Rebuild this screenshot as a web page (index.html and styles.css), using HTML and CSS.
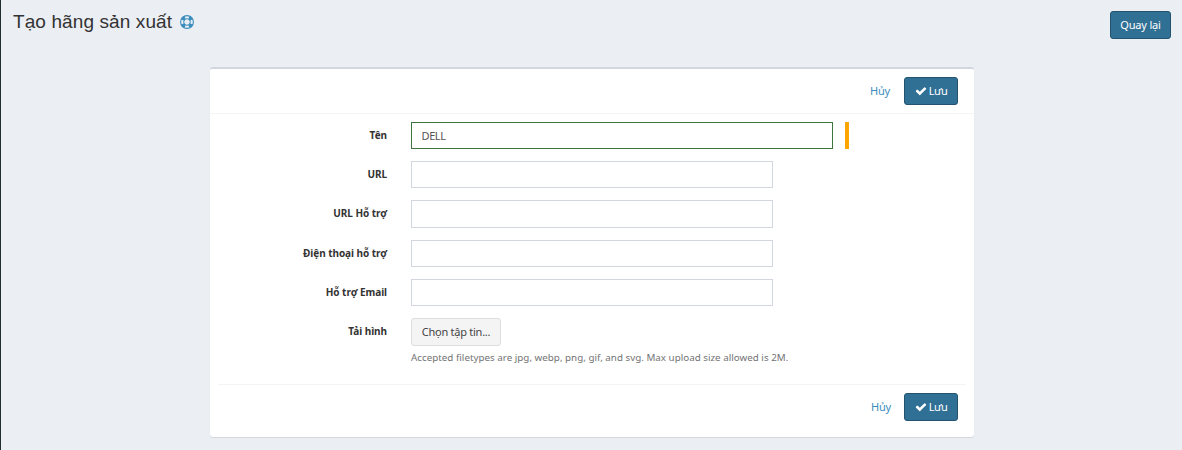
FILE: index.html
```html
<!DOCTYPE html>
<html lang="vi">
<head>
<meta charset="utf-8">
<title>Tạo hãng sản xuất</title>
<link rel="stylesheet" href="styles.css">
</head>
<body>
<header class="page-head">
  <h1 class="title"><span class="title-text">Tạo hãng sản xuất</span>
    <svg class="ring" viewBox="0 0 14 14"><circle cx="7" cy="7" r="6.4" fill="none" stroke="currentColor" stroke-width="1.1"/><circle cx="7" cy="7" r="3.3" fill="none" stroke="currentColor" stroke-width="1"/><circle cx="7" cy="7" r="4.9" fill="none" stroke="currentColor" stroke-width="3.8" pathLength="80" stroke-dasharray="9 11" stroke-dashoffset="-5.5"/></svg>
  </h1>
  <a class="btn back"><span>Quay lại</span></a>
</header>
<main class="box">
  <div class="actions top">
    <a class="cancel">Hủy</a>
    <button class="btn save"><svg class="check" viewBox="0 0 1792 1792"><path fill="currentColor" d="M1671 566q0 40-28 68l-724 724-136 136q-28 28-68 28t-68-28l-136-136-362-362q-28-28-28-68t28-68l136-136q28-28 68-28t68 28l294 295 656-657q28-28 68-28t68 28l136 136q28 28 28 68z"/></svg><span class="save-text">Lưu</span></button>
  </div>
  <form class="form">
    <div class="row"><label>Tên</label><input class="field name" value="DELL"><i class="required"></i></div>
    <div class="row"><label>URL</label><input class="field"></div>
    <div class="row"><label>URL Hỗ trợ</label><input class="field tall"></div>
    <div class="row"><label>Điện thoại hỗ trợ</label><input class="field"></div>
    <div class="row"><label>Hỗ trợ Email</label><input class="field"></div>
    <div class="row"><label>Tải hình</label><span class="file"><span>Chọn tập tin...</span></span></div>
    <p class="help">Accepted filetypes are jpg, webp, png, gif, and svg. Max upload size allowed is 2M.</p>
  </form>
  <div class="actions bottom">
    <a class="cancel">Hủy</a>
    <button class="btn save"><svg class="check" viewBox="0 0 1792 1792"><path fill="currentColor" d="M1671 566q0 40-28 68l-724 724-136 136q-28 28-68 28t-68-28l-136-136-362-362q-28-28-28-68t28-68l136-136q28-28 68-28t68 28l294 295 656-657q28-28 68-28t68 28l136 136q28 28 28 68z"/></svg><span class="save-text">Lưu</span></button>
  </div>
</main>
</body>
</html>
```
FILE: styles.css
```css
* { box-sizing: border-box; }
body {
  margin: 0;
  height: 450px;
  overflow: hidden;
  background: #ebeef3;
  border-left: 1px solid #222d32;
  font-family: "Noto Sans", "Open Sans", sans-serif;
  font-size: 11px;
  color: #333;
}
.page-head {
  display: flex;
  justify-content: space-between;
  align-items: flex-start;
  height: 67px;
  padding: 11px 11px 0 12px;
}
.title {
  display: flex;
  align-items: center;
  gap: 8px;
  margin: 0;
  font: 400 19px/21px "Liberation Sans", sans-serif;
}
.title-text { letter-spacing: 0.1px; }
.ring { width: 14px; height: 14px; color: #3c8dbc; margin-top: 1px; }
.btn {
  display: flex;
  align-items: center;
  justify-content: center;
  height: 28px;
  padding: 0;
  border: 1px solid #23536f;
  border-radius: 3px;
  background: #307095;
  color: #fff;
  font: 400 11px/16px "Noto Sans", sans-serif;
  white-space: nowrap;
}
.back { width: 61px; letter-spacing: -0.2px; }
.box {
  width: 764px;
  height: 370px;
  margin-left: 209px;
  border-top: 2px solid #d2d6de;
  border-radius: 3px;
  background: #fff;
  box-shadow: 0 1px 1px rgba(0, 0, 0, .1);
}
.actions {
  display: flex;
  justify-content: flex-end;
  align-items: center;
  gap: 14px;
}
.top { height: 45px; padding-right: 16px; border-bottom: 1px solid #f4f4f4; }
.bottom {
  height: 45px;
  margin: 18px 8px 0;
  padding-right: 8px;
  border-top: 1px solid #f4f4f4;
}
.bottom .cancel { margin-right: -1px; }
.cancel { color: #3c8dbc; line-height: 16px; letter-spacing: -0.2px; }
.save { width: 54px; gap: 2px; letter-spacing: -0.5px; }
.check { width: 12px; height: 12px; }
.form { padding-top: 8px; }
.row {
  display: flex;
  align-items: flex-start;
  height: 28px;
  margin-bottom: 11.2px;
}
.row label {
  width: 177px;
  margin-right: 24px;
  text-align: right;
  font-size: 10px;
  font-weight: 700;
  line-height: 27px;
  letter-spacing: -0.05px;
  white-space: nowrap;
}
.field {
  width: 362px;
  height: 27px;
  padding: 0 9.5px;
  border: 1px solid #d2d6de;
  border-radius: 0;
  outline: none;
  background: #fff;
  color: #555;
  font: 400 11px/16px "Noto Sans", sans-serif;
}
.tall { height: 28px; }
.name { width: 422px; border-color: #3c763d; letter-spacing: -0.4px; }
.required { width: 4px; height: 27px; margin-left: 12px; background: #ffa500; }
.file {
  display: flex;
  align-items: center;
  justify-content: center;
  width: 90px;
  height: 28px;
  border: 1px solid #ddd;
  border-radius: 3px;
  background: #f4f4f4;
  color: #444;
  letter-spacing: -0.25px;
  white-space: nowrap;
}
.help {
  margin: -7px 0 0 201px;
  font-size: 9.8px;
  line-height: 16px;
  letter-spacing: 0.01px;
  color: #737373;
  white-space: nowrap;
}
```
